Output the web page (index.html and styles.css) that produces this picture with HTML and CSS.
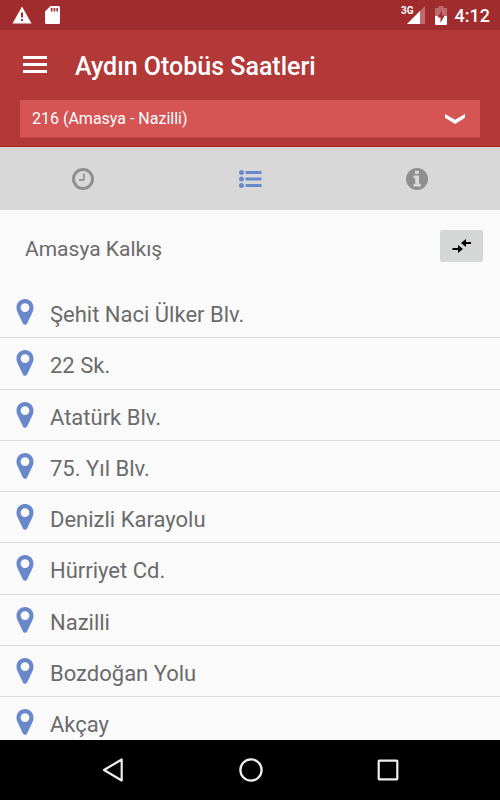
FILE: index.html
```
<!DOCTYPE html>
<html lang="tr">

<head>
    <meta charset="UTF-8">
    <meta name="viewport" content="width=device-width, initial-scale=1.0">
    <title>Aydın Otobüs Saatleri</title>
    <link rel="stylesheet" href="styles.css">
</head>

<body>
    <div class="status-bar">
        <svg class="warning" width="20" height="18" viewBox="0 0 20 18">
            <path fill="#fff" fill-rule="evenodd" d="M10 .5 19.5 17.5H.5zM9 6.5v5h2v-5zM9 13v2h2v-2z"/>
        </svg>
        <svg class="sd-card" width="15" height="18" viewBox="0 0 15 18">
            <path fill="#fff" fill-rule="evenodd" d="M5.5 0H13.5Q15 0 15 1.5V16.500Q15 18 13.500 18H1.500Q0 18 0 16.500V5.500zM5.800 2v3.500h1.700V2zM8.600 2v3.500h1.700V2zM11.400 2v3.500h1.600V2z"/>
        </svg>
        <span class="network">3G</span>
        <svg class="signal" width="18" height="18" viewBox="0 0 18 18">
            <path fill="#fff" fill-opacity=".3" d="M18 0V18H0z"/>
            <path fill="#fff" d="M13 5V18H0z"/>
        </svg>
        <svg class="battery" width="12" height="19" viewBox="0 0 12 19">
            <path fill="#fff" fill-opacity=".3" d="M3.500 0h5v2H12v8H0V2h3.500z"/>
            <path fill="#fff" d="M0 10h12v8q0 1-1 1H1q-1 0-1-1z"/>
            <path fill="#a12c2d" d="M7 4.500 2.500 11.500H5.500V17L9.700 9.500H7z"/>
        </svg>
        <span class="clock">4:12</span>
    </div>

    <header class="header">
        <div class="title-row">
            <div class="menu">
                <span></span>
                <span></span>
                <span></span>
            </div>
            <h1>Aydın Otobüs Saatleri</h1>
        </div>
        <div class="route-select">
            <span>216 (Amasya - Nazilli)</span>
            <svg width="20" height="10" viewBox="0 0 20 10">
                <path fill="#fff" d="M0 0 10 5.800 20 0V3.800L10 10 0 3.800z"/>
            </svg>
        </div>
    </header>

    <nav class="tabs">
        <div class="tab">
            <svg width="22" height="22" viewBox="0 0 22 22">
                <circle cx="11" cy="11" r="9.500" fill="none" stroke="#8f8f8f" stroke-width="3"/>
                <path d="M11.900 5.500V11.900H7" fill="none" stroke="#8f8f8f" stroke-width="1.600"/>
            </svg>
        </div>
        <div class="tab">
            <svg width="23" height="18" viewBox="0 0 23 18" fill="#6988cc">
                <circle cx="2.500" cy="2.500" r="2.500"/>
                <circle cx="2.500" cy="9" r="2.500"/>
                <circle cx="2.500" cy="15.500" r="2.500"/>
                <path d="M6.500 1H22.500V4H6.500zM6.500 7.500H22.500V10.500H6.500zM6.500 14H22.500V17H6.500z"/>
            </svg>
        </div>
        <div class="tab">
            <svg width="22" height="22" viewBox="0 0 22 22">
                <circle cx="11" cy="11" r="11" fill="#8f8f8f"/>
                <path fill="#d8d8d8" d="M9 2.800h4v3H9zM7.500 7.500H13V15.700H14.800V18.500H7.500V15.700H9.200V10.300H7.500z"/>
            </svg>
        </div>
    </nav>

    <main class="stops">
        <div class="direction">
            <h2>Amasya Kalkış</h2>
            <button class="swap">
                <svg width="20" height="14" viewBox="0 0 20 14">
                    <path fill="#000" d="M14 0V3H19V5H14V8L9 4zM6 6 11 10 6 14V11H.5V9H6z"/>
                </svg>
            </button>
        </div>
        <ul class="stop-list" id="stopList"></ul>
    </main>

    <footer class="nav-bar">
        <svg width="22" height="24" viewBox="0 0 22 24">
            <path d="M19.700 1.500V22.500L2 12z" fill="none" stroke="#eee" stroke-width="2.200" stroke-linejoin="round"/>
        </svg>
        <svg width="24" height="24" viewBox="0 0 24 24">
            <circle cx="12" cy="12" r="10.600" fill="none" stroke="#eee" stroke-width="2.300"/>
        </svg>
        <svg width="22" height="22" viewBox="0 0 22 22">
            <rect x="1.700" y="1.700" width="18.600" height="18.600" rx=".5" fill="none" stroke="#eee" stroke-width="2.200"/>
        </svg>
    </footer>

    <script>
        const stops = [
            'Şehit Naci Ülker Blv.',
            '22 Sk.',
            'Atatürk Blv.',
            '75. Yıl Blv.',
            'Denizli Karayolu',
            'Hürriyet Cd.',
            'Nazilli',
            'Bozdoğan Yolu',
            'Akçay'
        ];

        const stopList = document.getElementById('stopList');
        stops.forEach(stop => {
            const item = document.createElement('li');
            item.innerHTML = `
                <svg width="18" height="26" viewBox="0 0 18 26">
                    <path fill="#6988cc" fill-rule="evenodd" d="M9 0C13.900 0 17.500 3.700 17.500 8.500C17.500 10.500 17 12 16.200 13.700L11.200 24.200Q10.500 25.700 9 25.700T6.800 24.200L1.800 13.700C1 12 .5 10.500 .5 8.500C.5 3.700 4.100 0 9 0zM9 4.200A4.400 4.400 0 1 0 9 13A4.400 4.400 0 1 0 9 4.200z"/>
                </svg>
                <span>${stop}</span>
            `;
            stopList.appendChild(item);
        });
    </script>
</body>

</html>
```
FILE: styles.css
```
* {
    box-sizing: border-box;
}

body {
    margin: 0;
    width: 500px;
    height: 800px;
    display: flex;
    flex-direction: column;
    overflow: hidden;
    font-family: Roboto, "Liberation Sans", sans-serif;
    background-color: #fafafa;
}

svg {
    display: block;
    flex: none;
}

.status-bar {
    height: 30px;
    flex: none;
    display: flex;
    align-items: flex-start;
    padding: 6px 10px 0 12px;
    background-color: #a12c2d;
    color: #fff;
}

.sd-card {
    margin-left: 13px;
}

.network {
    margin-left: auto;
    margin-right: -7px;
    font-size: 10px;
    line-height: 10px;
    font-weight: 700;
}

.battery {
    margin-left: 10px;
}

.clock {
    margin-left: 8px;
    font-size: 18px;
    line-height: 20px;
    font-weight: 500;
}

.header {
    height: 117px;
    flex: none;
    padding: 0 20px;
    background-color: #b33939;
    border-bottom: 1px solid #b5201f;
}

.title-row {
    height: 70px;
    display: flex;
    align-items: center;
    padding-left: 3px;
}

.menu {
    width: 24px;
    height: 17px;
    display: flex;
    flex-direction: column;
    justify-content: space-between;
    margin-top: -1px;
}

.menu span {
    height: 3px;
    background-color: #fff;
}

h1 {
    margin: 3px 0 0 28px;
    font-size: 25px;
    line-height: 30px;
    font-weight: 500;
    color: #fff;
}

.route-select {
    height: 38px;
    display: flex;
    align-items: center;
    justify-content: space-between;
    padding: 0 15px 0 12px;
    background-color: #d55454;
    border-bottom: 1px solid #c84848;
    color: #fff;
    font-size: 16px;
}

.tabs {
    height: 63px;
    flex: none;
    display: flex;
    background-color: #d8d8d8;
}

.tab {
    flex: 1;
    display: flex;
    align-items: center;
    justify-content: center;
}

.stops {
    flex: 1;
    min-height: 0;
    overflow: hidden;
}

.direction {
    height: 77px;
    display: flex;
    align-items: flex-start;
    justify-content: space-between;
    padding: 20px 17px 0 25px;
}

h2 {
    margin: 7px 0 0;
    font-size: 21px;
    line-height: 25px;
    font-weight: 400;
    color: #6b6b6b;
}

.swap {
    width: 43px;
    height: 32px;
    display: flex;
    align-items: center;
    justify-content: center;
    padding: 0;
    border: none;
    border-radius: 2px;
    background-color: #d5d7d6;
}

.stop-list {
    margin: 0;
    padding: 0;
    list-style: none;
}

.stop-list li {
    height: 51.25px;
    display: flex;
    align-items: flex-start;
    padding: 12px 0 0 16px;
    border-bottom: 1px solid #d8d8d8;
}

.stop-list span {
    margin: 3px 0 0 16px;
    font-size: 22px;
    line-height: 26px;
    color: #6b6b6b;
}

.nav-bar {
    height: 60px;
    flex: none;
    display: flex;
    align-items: center;
    justify-content: space-between;
    padding: 0 101px 0 102px;
    background-color: #000;
}
```
